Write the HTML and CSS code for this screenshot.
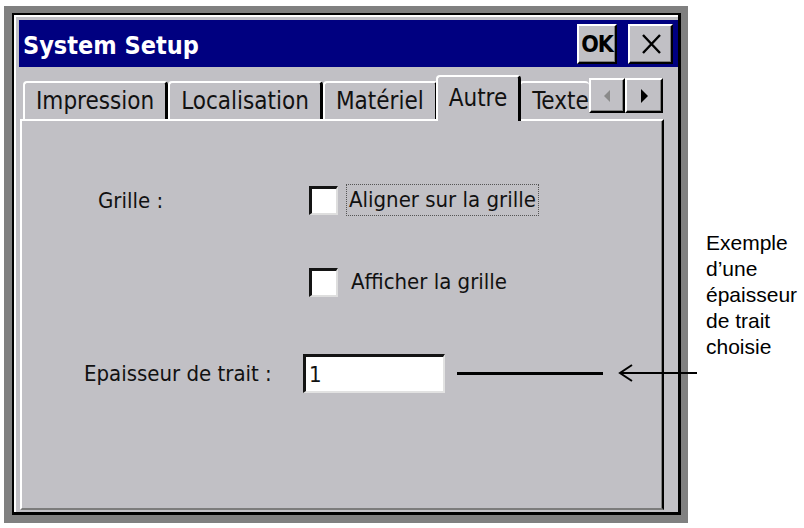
FILE: index.html
```html
<!DOCTYPE html>
<html lang="fr">
<head>
<meta charset="utf-8">
<title>System Setup</title>
<link rel="stylesheet" href="styles.css">
</head>
<body>
  <div class="frame">
    <div class="window">
      <div class="titlebar">
        <span class="title">System Setup</span>
        <button class="tbtn ok">OK</button>
        <button class="tbtn close" aria-label="Fermer">
          <svg width="22" height="22" viewBox="0 0 22 22"><path d="M3 2 L20 20 M20 2 L3 20" stroke="#000" stroke-width="2.4" fill="none"/></svg>
        </button>
      </div>
      <div class="tabrow">
        <div class="tab">Impression</div>
        <div class="tab">Localisation</div>
        <div class="tab">Matériel</div>
        <div class="tab active">Autre</div>
        <div class="tab cut">Texte</div>
        <div class="scroll">
          <button class="sbtn" aria-label="Précédent">
            <svg width="10" height="16" viewBox="0 0 10 16"><path d="M8 2 L2 8 L8 14 Z" fill="#8a8a8a"/></svg>
          </button>
          <button class="sbtn" aria-label="Suivant">
            <svg width="10" height="16" viewBox="0 0 10 16"><path d="M2 1 L9 8 L2 15 Z" fill="#000"/></svg>
          </button>
        </div>
      </div>
      <div class="panel">
        <div class="row row-grid">
          <span class="label label-grid">Grille :</span>
          <span class="check"></span>
          <span class="clabel focus">Aligner sur la grille</span>
        </div>
        <div class="row row-show">
          <span class="check"></span>
          <span class="clabel">Afficher la grille</span>
        </div>
        <div class="row row-width">
          <span class="label label-width">Epaisseur de trait :</span>
          <span class="field">1</span>
          <span class="sample"></span>
        </div>
      </div>
    </div>
  </div>
  <div class="note">Exemple<br>d’une<br>épaisseur<br>de trait<br>choisie</div>
  <svg class="pointer" width="82" height="20" viewBox="0 0 82 20">
    <path d="M3 10 L80 10" stroke="#000" stroke-width="2" fill="none"/>
    <path d="M15 2 L3 10 L15 18" stroke="#000" stroke-width="2" fill="none"/>
  </svg>
</body>
</html>
```

FILE: styles.css
```css
html, body {
  margin: 0;
  padding: 0;
}

body {
  width: 804px;
  height: 528px;
  overflow: hidden;
  position: relative;
  background: #ffffff;
  display: flex;
  align-items: flex-start;
  font-family: "DejaVu Sans Condensed", "DejaVu Sans", sans-serif;
  font-stretch: condensed;
}

.frame {
  margin: 6px 0 0 4px;
  width: 684px;
  height: 517px;
  box-sizing: border-box;
  background: #808080;
  padding: 7px 7px 8px 8px;
  display: flex;
}

.window {
  flex: 1;
  display: flex;
  flex-direction: column;
  background: #c1c0c5;
  border: 2px solid #000;
  border-right-width: 3px;
  border-bottom-width: 3px;
  box-shadow: inset 2px 2px 0 #ffffff;
  padding: 5px 0 2px 5px;
}

/* title bar */
.titlebar {
  height: 47px;
  flex: none;
  background: #000080;
  display: flex;
  align-items: center;
  padding: 0 5px 0 4px;
}

.title {
  flex: 1;
  color: #ffffff;
  font-weight: bold;
  font-size: 25px;
  padding-top: 3px;
  white-space: nowrap;
}

.tbtn {
  height: 40px;
  box-sizing: border-box;
  margin: 0;
  padding: 0;
  background: #c1c0c5;
  border: 2px solid;
  border-color: #ffffff #000000 #000000 #ffffff;
  box-shadow: inset -1px -1px 0 #808080;
  display: flex;
  align-items: center;
  justify-content: center;
  font-family: inherit;
  color: #000;
}

.ok {
  width: 40px;
  font-weight: bold;
  font-size: 23px;
  letter-spacing: -1px;
  padding-top: 1px;
}

.close {
  width: 45px;
  margin-left: 11px;
}

/* tabs */
.tabrow {
  height: 52px;
  flex: none;
  display: flex;
  align-items: flex-end;
  padding-left: 4px;
  margin-right: 15px;
}

.tab {
  height: 38px;
  box-sizing: border-box;
  padding: 0 11px;
  border-left: 2px solid #ffffff;
  border-top: 2px solid #ffffff;
  border-right: 3px solid #000000;
  border-radius: 4px 4px 0 0;
  display: flex;
  align-items: center;
  font-size: 24px;
  color: #111;
  white-space: nowrap;
  background: #c1c0c5;
}

.tab.active {
  height: 46px;
  margin: 0 -2px -2px;
  position: relative;
  z-index: 1;
  padding-bottom: 2px;
}

.tab.cut {
  flex: 1;
  min-width: 0;
  overflow: hidden;
  border-right: 0;
  padding-right: 0;
}

.scroll {
  display: flex;
  margin-bottom: 6px;
}

.sbtn {
  width: 36px;
  height: 35px;
  box-sizing: border-box;
  margin: 0;
  padding: 0;
  background: #c1c0c5;
  border: 2px solid;
  border-color: #ffffff #000000 #000000 #ffffff;
  box-shadow: inset -1px -1px 0 #808080;
  display: flex;
  align-items: center;
  justify-content: center;
}

.sbtn + .sbtn {
  width: 38px;
}

/* panel */
.panel {
  flex: 1;
  margin: 0 14px 0 1px;
  border-top: 2px solid #ffffff;
  border-left: 2px solid #ffffff;
  border-right: 2px solid #000000;
  border-bottom: 2px solid #7c7c7c;
  box-shadow: inset -1px 0 0 #808080;
  display: flex;
  flex-direction: column;
  font-size: 22px;
  color: #111;
}

.row {
  display: flex;
  align-items: center;
}

.row-grid {
  margin-top: 63px;
  height: 32px;
  padding-left: 76px;
}

.label-grid {
  width: 211px;
  flex: none;
}

.row-show {
  margin-top: 50px;
  height: 32px;
  padding-left: 287px;
}

.row-width {
  margin-top: 56px;
  height: 39px;
  padding-left: 62px;
}

.label-width {
  width: 219px;
  flex: none;
}

.label, .clabel {
  white-space: nowrap;
}

.check {
  width: 29px;
  height: 29px;
  box-sizing: border-box;
  flex: none;
  background: #ffffff;
  border: 3px solid;
  border-color: #141414 #dedede #dedede #141414;
  border-right-width: 2px;
  border-bottom-width: 2px;
}

.clabel {
  margin-left: 10px;
  padding: 0 2px;
  line-height: 30px;
  border: 1px solid transparent;
}

.clabel.focus {
  margin-left: 8px;
  border: 1px dotted #555;
}

.field {
  width: 142px;
  height: 39px;
  box-sizing: border-box;
  flex: none;
  background: #ffffff;
  border: 3px solid;
  border-color: #141414 #e2e2e2 #e2e2e2 #141414;
  border-right-width: 2px;
  border-bottom-width: 2px;
  padding-left: 3px;
  display: flex;
  align-items: center;
}

.sample {
  width: 146px;
  height: 3px;
  margin-left: 12px;
  background: #000;
}

/* annotation */
.note {
  margin: 230px 0 0 18px;
  font-family: "Liberation Sans", Arial, sans-serif;
  font-stretch: normal;
  font-size: 21px;
  line-height: 26px;
  color: #000;
}

.pointer {
  position: absolute;
  left: 617px;
  top: 363px;
}
```
